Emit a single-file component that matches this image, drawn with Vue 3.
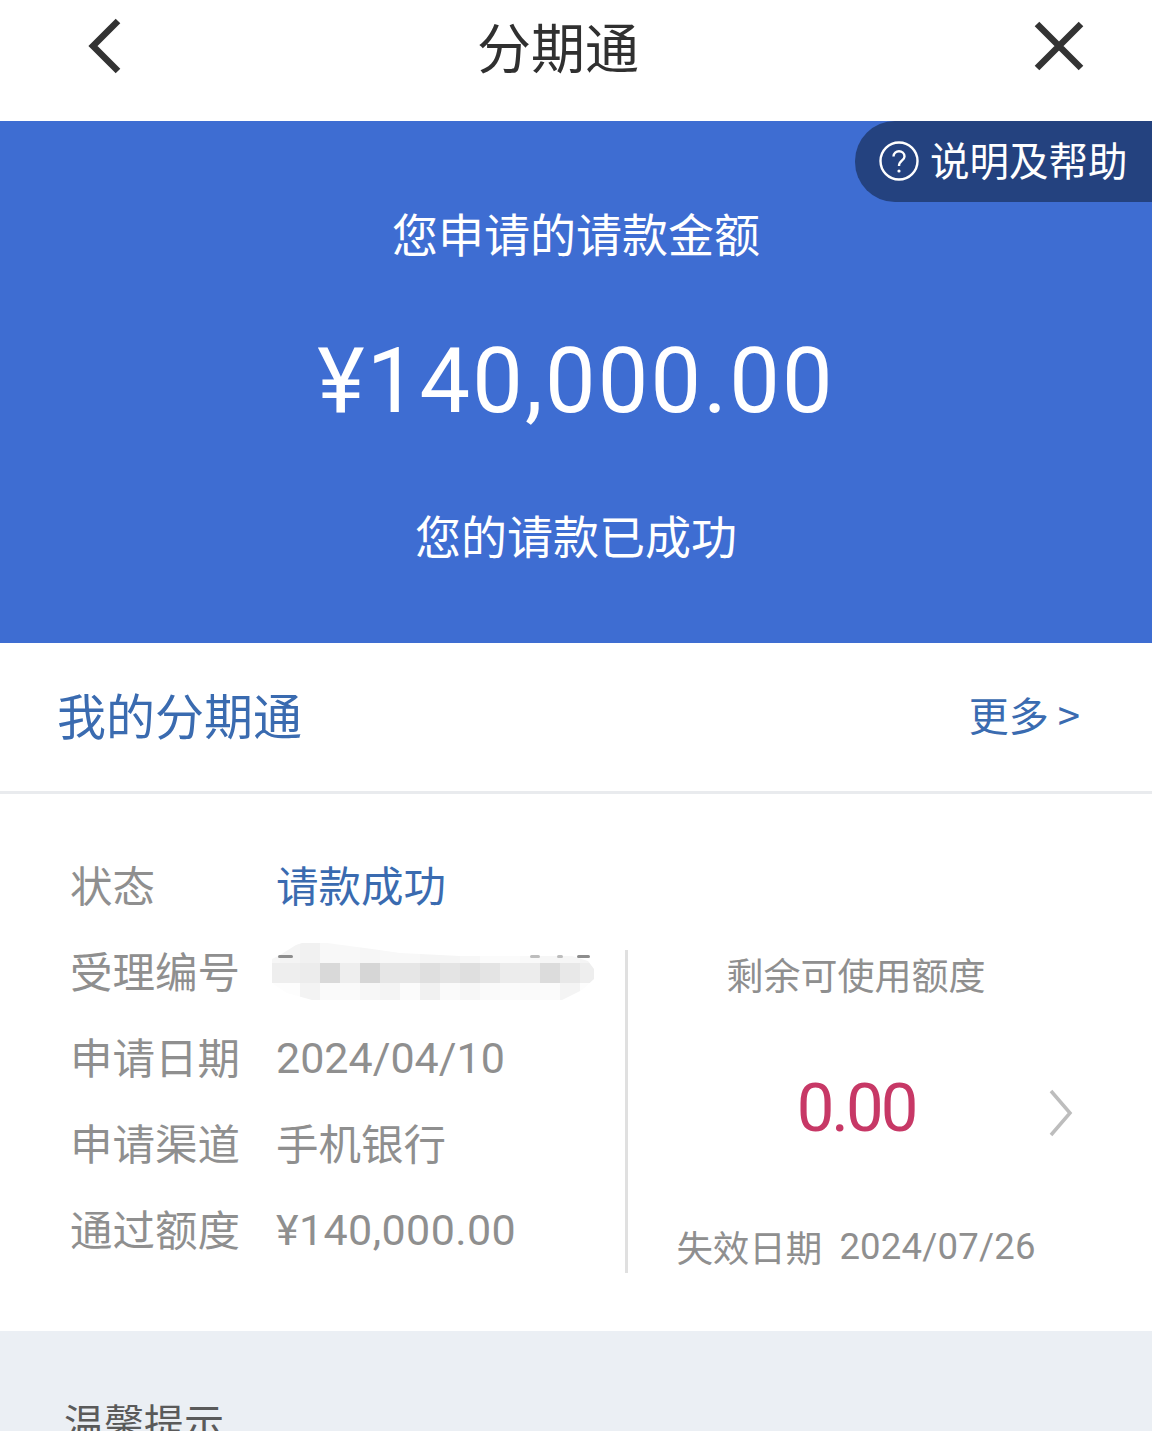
<template>
  <div class="page">
    <header class="nav">
      <svg class="nav-icon back" viewBox="0 0 42 64" width="42" height="64">
        <path d="M35 5 L10 30 L35 55" />
      </svg>
      <h1>分期通</h1>
      <svg class="nav-icon close" viewBox="0 0 52 52" width="52" height="52">
        <path d="M4 4 L48 48 M48 4 L4 48" />
      </svg>
    </header>

    <section class="hero">
      <div class="help">
        <svg viewBox="0 0 42 42" width="42" height="42">
          <circle cx="21" cy="21" r="18.5" />
          <path d="M15.5 16.5 C15.5 9.5 26.5 9.5 26.5 16.5 C26.5 20.5 21 20.5 21 26" />
          <circle class="dot" cx="21" cy="31" r="1.6" />
        </svg>
        <span>说明及帮助</span>
      </div>
      <p class="hero-label">您申请的请款金额</p>
      <p class="hero-amount">¥140,000.00</p>
      <p class="hero-status">您的请款已成功</p>
    </section>

    <div class="section-title">
      <h2>我的分期通</h2>
      <span class="more">更多 &gt;</span>
    </div>

    <section class="detail">
      <div class="rows">
        <div class="row">
          <label>状态</label>
          <span class="blue">请款成功</span>
        </div>
        <div class="row">
          <label>受理编号</label>
          <div class="mosaic-wrap">
            <div class="mosaic">
              <i v-for="(c, i) in mosaicCells" :key="i" :style="{ background: c }"></i>
            </div>
            <b class="frag frag-a"></b>
            <b class="frag frag-b"></b>
            <b class="frag frag-c"></b>
            <b class="frag frag-d"></b>
          </div>
        </div>
        <div class="row" v-for="r in rows" :key="r.label">
          <label>{{ r.label }}</label>
          <span :class="r.type">{{ r.value }}</span>
        </div>
      </div>

      <div class="quota">
        <p class="quota-title">剩余可使用额度</p>
        <div class="quota-value">
          <span>0.00</span>
          <svg viewBox="0 0 28 50" width="28" height="50">
            <path d="M5 3 L24 25 L5 47" />
          </svg>
        </div>
        <p class="quota-date"><span>失效日期</span><span>2024/07/26</span></p>
      </div>
    </section>

    <section class="tips">
      <h3>温馨提示</h3>
    </section>
  </div>
</template>

<script setup>
const rows = [
  { label: '申请日期', value: '2024/04/10', type: 'num date' },
  { label: '申请渠道', value: '手机银行', type: '' },
  { label: '通过额度', value: '¥140,000.00', type: 'num' }
]

// 打码区域的马赛克格子，三行，每行 17 格
const top = ['#f6f6f6', '#f4f4f4', '#f1f1f1', '#f8f8f8', '#f8f8f8', '#f6f6f6', '#f8f8f8', '#f8f8f8', '#f5f5f5', '#f5f5f5', '#f7f7f7', '#fbfbfb', '#fbfbfb', '#f9f9f9', '#f6f6f6', '#f6f6f6', '#f4f4f4']
const mid = ['#eeeeee', '#eeeeee', '#ececec', '#d9d9d9', '#eeeeee', '#d6d6d6', '#e6e6e6', '#e6e6e6', '#dfdfdf', '#e4e4e4', '#dfdfdf', '#e4e4e4', '#ececec', '#ececec', '#dcdcdc', '#e8e8e8', '#eeeeee']
const low = ['#fdfdfd', '#fdfdfd', '#f3f3f3', '#fafafa', '#fafafa', '#f7f7f7', '#f4f4f4', '#fbfbfb', '#f1f1f1', '#fafafa', '#f7f7f7', '#fafafa', '#fbfbfb', '#fafafa', '#fbfbfb', '#f4f4f4', '#fdfdfd']
const mosaicCells = [...top, ...mid, ...low]
</script>

<style scoped>
.page {
  width: 1152px;
  height: 1431px;
  overflow: hidden;
  background: #fff;
  font-family: "Noto Sans CJK SC", "Noto Sans", sans-serif;
  color: #8f8f8f;
}
p, h1, h2, h3 { margin: 0; font-weight: 400; }

.nav {
  height: 121px;
  display: flex;
  justify-content: center;
  position: relative;
}
.nav h1 {
  font-size: 54px;
  line-height: 70px;
  color: #303030;
  margin: 11px 36px 0 0;
}
.nav-icon { position: absolute; fill: none; stroke: #333; stroke-width: 6.5; }
.back { left: 83px; top: 16px; }
.close { left: 1033px; top: 20px; }

.hero {
  height: 522px;
  position: relative;
  background: #3e6dd2;
  color: #fff;
  display: flex;
  flex-direction: column;
  align-items: center;
  text-align: center;
}
.help {
  position: absolute;
  right: 0;
  top: 0;
  width: 297px;
  height: 81px;
  background: #24427f;
  border-radius: 40px 0 0 40px;
  display: flex;
  align-items: center;
  padding-left: 23px;
  box-sizing: border-box;
  gap: 10px;
  font-size: 39.5px;
}
.help span { margin-top: -6px; }
.help svg { fill: none; stroke: #fff; stroke-width: 2.4; flex: none; margin-top: -2px; }
.help .dot { fill: #fff; stroke: none; }
.hero-label { font-size: 46px; line-height: 60px; margin-top: 81px; }
.hero-amount {
  font-family: Roboto, "Noto Sans", sans-serif;
  font-size: 90px;
  letter-spacing: 2.2px;
  line-height: 110px;
  margin-top: 65px;
}
.hero-status { font-size: 46px; line-height: 60px; margin-top: 67px; }

.section-title {
  height: 151px;
  box-sizing: border-box;
  border-bottom: 3px solid #e9ebee;
  display: flex;
  align-items: center;
  justify-content: space-between;
  padding: 0 72px 8px 57px;
}
.section-title h2 { font-size: 49px; color: #3a6bb0; }
.more { font-size: 40px; color: #3a6bb0; margin-top: 2px; }

.detail {
  height: 537px;
  box-sizing: border-box;
  display: flex;
  padding: 46px 0 0 70px;
}
.rows { width: 555px; flex: none; }
.row {
  height: 86px;
  display: flex;
  align-items: center;
  font-size: 42.5px;
  color: #8f8f8f;
}
.row label { width: 206px; flex: none; }
.row .num {
  font-family: Roboto, "Noto Sans CJK SC", sans-serif;
  font-size: 43px;
  letter-spacing: 0.4px;
  padding-top: 6px;
}
.row .date { letter-spacing: 0; }
.row .blue { color: #3a6bb0; }
.mosaic-wrap {
  position: relative;
  margin: 8px 0 0 -4px;
  width: 324px;
  height: 60px;
}
.mosaic {
  height: 60px;
  display: grid;
  grid-template-columns: 8px repeat(15, 20px) 16px;
  grid-template-rows: repeat(3, 20px);
  clip-path: polygon(0 16px, 8px 12px, 24px 2px, 30px 0, 55px 0, 100px 6px, 128px 10px, 188px 13px, 300px 13px, 316px 18px, 322px 26px, 322px 36px, 310px 47px, 290px 57px, 40px 57px, 15px 50px, 0 40px);
}
.mosaic i { display: block; }
.frag {
  position: absolute;
  height: 3px;
  top: 12px;
  background: #bdbdbd;
  border-radius: 2px;
}
.frag-a { left: 6px; width: 15px; background: #8d8d8d; }
.frag-b { left: 258px; width: 10px; }
.frag-c { left: 285px; width: 6px; }
.frag-d { left: 305px; width: 13px; background: #8d8d8d; }

.quota {
  width: 455px;
  height: 323px;
  margin-top: 110px;
  padding-left: 4px;
  flex: none;
  border-left: 3px solid #e0e0e0;
  box-sizing: border-box;
  display: flex;
  flex-direction: column;
  align-items: center;
}
.quota-title { font-size: 37px; line-height: 50px; margin-top: -1px; white-space: nowrap; }
.quota-value {
  position: relative;
  margin-top: 64px;
  font-family: Roboto, sans-serif;
  font-size: 67px;
  letter-spacing: -3px;
  line-height: 90px;
  color: #c73866;
}
.quota-value svg {
  position: absolute;
  left: 249px;
  top: 25px;
  fill: none;
  stroke: #bdbdbd;
  stroke-width: 3.5;
}
.quota-date {
  margin-top: 69px;
  font-size: 36.5px;
  line-height: 50px;
  display: flex;
  gap: 17px;
  white-space: nowrap;
}
.quota-date span:last-child { font-family: Roboto, sans-serif; letter-spacing: 0.2px; }

.tips {
  height: 100px;
  background: #ebeff4;
  padding: 65px 0 0 64px;
  box-sizing: border-box;
}
.tips h3 { font-size: 40px; line-height: 50px; color: #5a5a5a; }
</style>

<style>
html, body { margin: 0; background: #fff; }
</style>
